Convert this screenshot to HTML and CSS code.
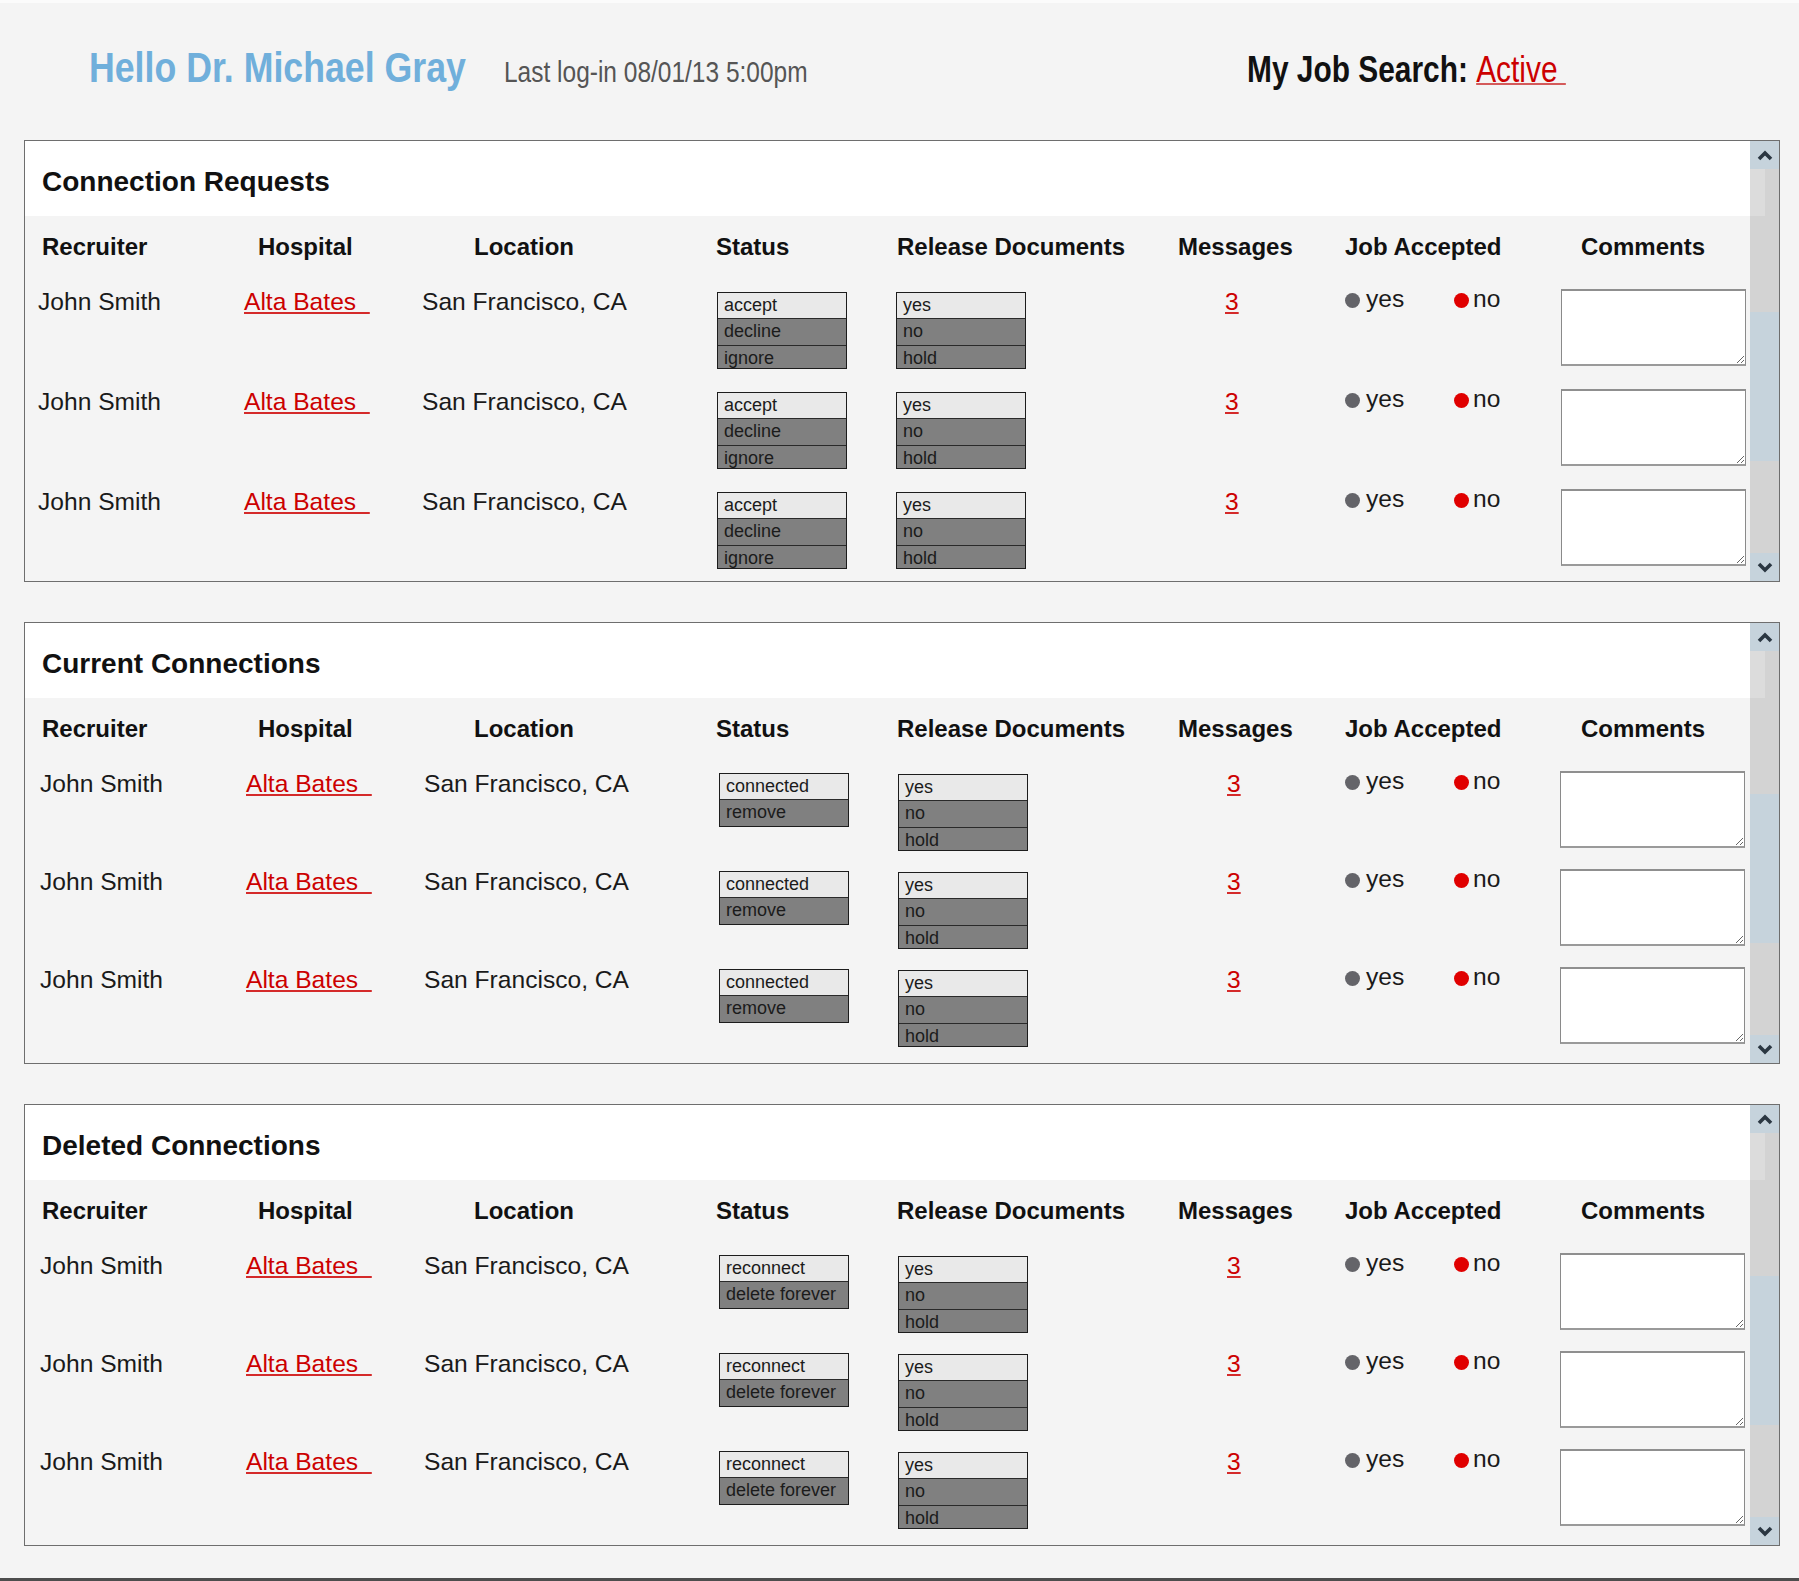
FILE: index.html
```html
<!DOCTYPE html>
<html lang="en">
<head>
<meta charset="utf-8">
<title>Connections</title>
<link rel="stylesheet" href="styles.css">
</head>
<body>
<header class="topbar">
  <div class="greeting">
    <div class="hello"><span class="squeeze">Hello Dr. Michael Gray</span></div>
    <div class="lastlog"><span class="squeeze">Last log-in 08/01/13 5:00pm</span></div>
  </div>
  <div class="jobsearch"><span class="squeeze">My Job Search: <a href="#">Active&nbsp;</a></span></div>
</header>

<main class="panels">
  <!-- Connection Requests -->
  <section class="panel">
    <div class="panel-main">
      <div class="panel-head">Connection Requests</div>
      <div class="panel-body">
        <div class="grid-row head-row">
          <div class="h-name">Recruiter</div>
          <div class="h-hosp">Hospital</div>
          <div class="h-loc">Location</div>
          <div class="h-status">Status</div>
          <div class="h-rel">Release Documents</div>
          <div class="h-msg">Messages</div>
          <div class="h-job">Job Accepted</div>
          <div class="h-com">Comments</div>
        </div>
        <div class="grid-row row">
          <div class="c-name">John Smith</div>
          <div class="c-hosp"><a href="#">Alta Bates&nbsp;&nbsp;</a></div>
          <div class="c-loc">San Francisco, CA</div>
          <div class="c-status"><div class="optbox"><span>accept</span><span>decline</span><span>ignore</span></div></div>
          <div class="c-rel"><div class="optbox"><span>yes</span><span>no</span><span>hold</span></div></div>
          <div class="c-msg"><a href="#">3</a></div>
          <div class="c-job"><span class="opt-yes"><i class="dot"></i>yes</span><span><i class="dot dot-red"></i>no</span></div>
          <div class="c-com"><textarea></textarea></div>
        </div>
        <div class="grid-row row">
          <div class="c-name">John Smith</div>
          <div class="c-hosp"><a href="#">Alta Bates&nbsp;&nbsp;</a></div>
          <div class="c-loc">San Francisco, CA</div>
          <div class="c-status"><div class="optbox"><span>accept</span><span>decline</span><span>ignore</span></div></div>
          <div class="c-rel"><div class="optbox"><span>yes</span><span>no</span><span>hold</span></div></div>
          <div class="c-msg"><a href="#">3</a></div>
          <div class="c-job"><span class="opt-yes"><i class="dot"></i>yes</span><span><i class="dot dot-red"></i>no</span></div>
          <div class="c-com"><textarea></textarea></div>
        </div>
        <div class="grid-row row">
          <div class="c-name">John Smith</div>
          <div class="c-hosp"><a href="#">Alta Bates&nbsp;&nbsp;</a></div>
          <div class="c-loc">San Francisco, CA</div>
          <div class="c-status"><div class="optbox"><span>accept</span><span>decline</span><span>ignore</span></div></div>
          <div class="c-rel"><div class="optbox"><span>yes</span><span>no</span><span>hold</span></div></div>
          <div class="c-msg"><a href="#">3</a></div>
          <div class="c-job"><span class="opt-yes"><i class="dot"></i>yes</span><span><i class="dot dot-red"></i>no</span></div>
          <div class="c-com"><textarea></textarea></div>
        </div>
      </div>
    </div>
    <div class="scrollbar">
      <div class="sb-btn"><svg width="16" height="11" viewBox="0 0 16 11"><polyline points="2,9 8,3 14,9" fill="none" stroke="#2b3742" stroke-width="3.6"/></svg></div>
      <div class="sb-gap"></div>
      <div class="sb-thumb"></div>
      <div class="sb-rest"></div>
      <div class="sb-btn"><svg width="16" height="11" viewBox="0 0 16 11"><polyline points="2,2 8,8 14,2" fill="none" stroke="#2b3742" stroke-width="3.6"/></svg></div>
    </div>
  </section>

  <!-- Current Connections -->
  <section class="panel panel--compact">
    <div class="panel-main">
      <div class="panel-head">Current Connections</div>
      <div class="panel-body">
        <div class="grid-row head-row">
          <div class="h-name">Recruiter</div>
          <div class="h-hosp">Hospital</div>
          <div class="h-loc">Location</div>
          <div class="h-status">Status</div>
          <div class="h-rel">Release Documents</div>
          <div class="h-msg">Messages</div>
          <div class="h-job">Job Accepted</div>
          <div class="h-com">Comments</div>
        </div>
        <div class="grid-row row">
          <div class="c-name">John Smith</div>
          <div class="c-hosp"><a href="#">Alta Bates&nbsp;&nbsp;</a></div>
          <div class="c-loc">San Francisco, CA</div>
          <div class="c-status"><div class="optbox"><span>connected</span><span>remove</span></div></div>
          <div class="c-rel"><div class="optbox"><span>yes</span><span>no</span><span>hold</span></div></div>
          <div class="c-msg"><a href="#">3</a></div>
          <div class="c-job"><span class="opt-yes"><i class="dot"></i>yes</span><span><i class="dot dot-red"></i>no</span></div>
          <div class="c-com"><textarea></textarea></div>
        </div>
        <div class="grid-row row">
          <div class="c-name">John Smith</div>
          <div class="c-hosp"><a href="#">Alta Bates&nbsp;&nbsp;</a></div>
          <div class="c-loc">San Francisco, CA</div>
          <div class="c-status"><div class="optbox"><span>connected</span><span>remove</span></div></div>
          <div class="c-rel"><div class="optbox"><span>yes</span><span>no</span><span>hold</span></div></div>
          <div class="c-msg"><a href="#">3</a></div>
          <div class="c-job"><span class="opt-yes"><i class="dot"></i>yes</span><span><i class="dot dot-red"></i>no</span></div>
          <div class="c-com"><textarea></textarea></div>
        </div>
        <div class="grid-row row">
          <div class="c-name">John Smith</div>
          <div class="c-hosp"><a href="#">Alta Bates&nbsp;&nbsp;</a></div>
          <div class="c-loc">San Francisco, CA</div>
          <div class="c-status"><div class="optbox"><span>connected</span><span>remove</span></div></div>
          <div class="c-rel"><div class="optbox"><span>yes</span><span>no</span><span>hold</span></div></div>
          <div class="c-msg"><a href="#">3</a></div>
          <div class="c-job"><span class="opt-yes"><i class="dot"></i>yes</span><span><i class="dot dot-red"></i>no</span></div>
          <div class="c-com"><textarea></textarea></div>
        </div>
      </div>
    </div>
    <div class="scrollbar">
      <div class="sb-btn"><svg width="16" height="11" viewBox="0 0 16 11"><polyline points="2,9 8,3 14,9" fill="none" stroke="#2b3742" stroke-width="3.6"/></svg></div>
      <div class="sb-gap"></div>
      <div class="sb-thumb"></div>
      <div class="sb-rest"></div>
      <div class="sb-btn"><svg width="16" height="11" viewBox="0 0 16 11"><polyline points="2,2 8,8 14,2" fill="none" stroke="#2b3742" stroke-width="3.6"/></svg></div>
    </div>
  </section>

  <!-- Deleted Connections -->
  <section class="panel panel--compact">
    <div class="panel-main">
      <div class="panel-head">Deleted Connections</div>
      <div class="panel-body">
        <div class="grid-row head-row">
          <div class="h-name">Recruiter</div>
          <div class="h-hosp">Hospital</div>
          <div class="h-loc">Location</div>
          <div class="h-status">Status</div>
          <div class="h-rel">Release Documents</div>
          <div class="h-msg">Messages</div>
          <div class="h-job">Job Accepted</div>
          <div class="h-com">Comments</div>
        </div>
        <div class="grid-row row">
          <div class="c-name">John Smith</div>
          <div class="c-hosp"><a href="#">Alta Bates&nbsp;&nbsp;</a></div>
          <div class="c-loc">San Francisco, CA</div>
          <div class="c-status"><div class="optbox"><span>reconnect</span><span>delete forever</span></div></div>
          <div class="c-rel"><div class="optbox"><span>yes</span><span>no</span><span>hold</span></div></div>
          <div class="c-msg"><a href="#">3</a></div>
          <div class="c-job"><span class="opt-yes"><i class="dot"></i>yes</span><span><i class="dot dot-red"></i>no</span></div>
          <div class="c-com"><textarea></textarea></div>
        </div>
        <div class="grid-row row">
          <div class="c-name">John Smith</div>
          <div class="c-hosp"><a href="#">Alta Bates&nbsp;&nbsp;</a></div>
          <div class="c-loc">San Francisco, CA</div>
          <div class="c-status"><div class="optbox"><span>reconnect</span><span>delete forever</span></div></div>
          <div class="c-rel"><div class="optbox"><span>yes</span><span>no</span><span>hold</span></div></div>
          <div class="c-msg"><a href="#">3</a></div>
          <div class="c-job"><span class="opt-yes"><i class="dot"></i>yes</span><span><i class="dot dot-red"></i>no</span></div>
          <div class="c-com"><textarea></textarea></div>
        </div>
        <div class="grid-row row">
          <div class="c-name">John Smith</div>
          <div class="c-hosp"><a href="#">Alta Bates&nbsp;&nbsp;</a></div>
          <div class="c-loc">San Francisco, CA</div>
          <div class="c-status"><div class="optbox"><span>reconnect</span><span>delete forever</span></div></div>
          <div class="c-rel"><div class="optbox"><span>yes</span><span>no</span><span>hold</span></div></div>
          <div class="c-msg"><a href="#">3</a></div>
          <div class="c-job"><span class="opt-yes"><i class="dot"></i>yes</span><span><i class="dot dot-red"></i>no</span></div>
          <div class="c-com"><textarea></textarea></div>
        </div>
      </div>
    </div>
    <div class="scrollbar">
      <div class="sb-btn"><svg width="16" height="11" viewBox="0 0 16 11"><polyline points="2,9 8,3 14,9" fill="none" stroke="#2b3742" stroke-width="3.6"/></svg></div>
      <div class="sb-gap"></div>
      <div class="sb-thumb"></div>
      <div class="sb-rest"></div>
      <div class="sb-btn"><svg width="16" height="11" viewBox="0 0 16 11"><polyline points="2,2 8,8 14,2" fill="none" stroke="#2b3742" stroke-width="3.6"/></svg></div>
    </div>
  </section>
</main>
<div class="bottom-line"></div>
</body>
</html>
```

FILE: styles.css
```css
* { box-sizing: border-box; }

html, body { margin: 0; padding: 0; }

body {
  width: 1799px;
  height: 1581px;
  overflow: hidden;
  background: #f4f4f4;
  border-top: 3px solid #fbfbfb;
  font-family: "Liberation Sans", Arial, Helvetica, sans-serif;
  color: #111;
}

a { color: #cc0000; text-decoration: underline; text-decoration-color: #d42a2a; }

/* ---------- top bar ---------- */
.topbar {
  height: 137px;
  display: flex;
  align-items: baseline;
  padding: 39px 0 0 89px;
  line-height: 50px;
  white-space: nowrap;
}
.squeeze {
  display: inline-block;
  transform: scaleX(0.83);
  transform-origin: 0 50%;
}
.greeting {
  width: 1158px;
  flex: none;
  display: flex;
  align-items: baseline;
}
.hello {
  width: 415px;
  flex: none;
  font-size: 43px;
  font-weight: 700;
  color: #70afdb;
}
.lastlog {
  font-size: 29.5px;
  color: #555;
}
.jobsearch {
  font-size: 36px;
  font-weight: 700;
  color: #111;
}
.jobsearch a {
  font-weight: 400;
  text-decoration-thickness: 2px;
  text-decoration-color: #d45a5a;
}

/* ---------- panels ---------- */
.panels {
  display: flex;
  flex-direction: column;
  gap: 40px;
  padding-left: 24px;
}
.panel {
  width: 1756px;
  height: 442px;
  border: 1px solid #6e6e6e;
  background: #f4f4f4;
  display: flex;
  overflow: hidden;
}
.panel-main {
  flex: 1;
  min-width: 0;
}
.panel-head {
  height: 75px;
  background: #fff;
  padding: 25px 0 0 17px;
  font-size: 28px;
  line-height: 32px;
  font-weight: 700;
  color: #111;
}
.panel-body {
  padding-top: 17px;
}
.grid-row {
  display: grid;
  grid-template-columns: 215px 175px 297px 178px 280px 150px 220px 210px;
}
.head-row {
  height: 28px;
  margin-bottom: 27px;
  font-size: 24px;
  line-height: 28px;
  font-weight: 700;
  color: #111;
  white-space: nowrap;
}
.h-name { padding-left: 17px; }
.h-hosp { padding-left: 18px; }
.h-loc { padding-left: 59px; }
.h-status { padding-left: 4px; }
.h-rel { padding-left: 7px; }
.h-msg { padding-left: 8px; }
.h-job { padding-left: 25px; }
.h-com { padding-left: 41px; }

.row {
  height: 100px;
  align-items: start;
  font-size: 24.6px;
  line-height: 28px;
  color: #1a1a1a;
  white-space: nowrap;
}
.panel--compact .row { height: 98px; }

.c-name { padding-left: 13px; }
.c-hosp { padding-left: 4px; }
.c-loc { padding-left: 7px; }
.c-status { padding: 4px 0 0 5px; }
.c-rel { padding: 4px 0 0 6px; }
.c-msg { padding-left: 55px; }
.c-job { padding-left: 25px; margin-top: -3px; display: flex; }
.c-com { padding: 1px 0 0 21px; }

.panel--compact .c-name { padding-left: 15px; }
.panel--compact .c-hosp { padding-left: 6px; }
.panel--compact .c-loc { padding-left: 9px; }
.panel--compact .c-status { padding: 3px 0 0 7px; }
.panel--compact .c-rel { padding: 4px 0 0 8px; }
.panel--compact .c-msg { padding-left: 57px; }
.panel--compact .c-com { padding-left: 20px; }

/* option list boxes */
.optbox {
  width: 130px;
  max-height: 77px;
  overflow: hidden;
  border: 1px solid #1c1c1c;
  font-size: 18px;
  line-height: 25px;
  color: #1b1b1b;
}
.optbox span {
  display: block;
  height: 27px;
  padding-left: 6px;
  border-top: 1px solid #2a2a2a;
  background: #808080;
  line-height: 24px;
}
.optbox span:first-child {
  height: 25px;
  border-top: 0;
  background: #e9e9e9;
  line-height: 25px;
}

/* radios */
.opt-yes { width: 109px; }
.dot {
  display: inline-block;
  width: 15px;
  height: 15px;
  border-radius: 50%;
  background: #646469;
  margin-right: 6px;
  vertical-align: -1px;
}
.dot-red { background: #e00000; margin-right: 4px; }

textarea {
  display: block;
  width: 185px;
  height: 77px;
  margin: 0;
  border: 1px solid #8a8a8a;
  border-top: 2px solid #8f8f8f;
  border-bottom: 2px solid #9a9a9a;
  background: #fff;
}

/* scrollbar */
.scrollbar {
  position: relative;
  flex: none;
  width: 29px;
  display: flex;
  flex-direction: column;
  background: #d3d3d3;
}
.scrollbar::before {
  content: "";
  position: absolute;
  left: 0;
  top: 28px;
  width: 15px;
  height: 47px;
  background: #dcdcdc;
}
.sb-btn {
  height: 28px;
  flex: none;
  background: #c6d3dc;
  display: flex;
  align-items: center;
  justify-content: center;
}
.sb-gap { height: 143px; flex: none; }
.sb-thumb { height: 149px; flex: none; background: #c6d3dc; }
.sb-rest { flex: 1; }

.bottom-line {
  margin-top: 32px;
  height: 3px;
  background: #4d4d4d;
}
```
